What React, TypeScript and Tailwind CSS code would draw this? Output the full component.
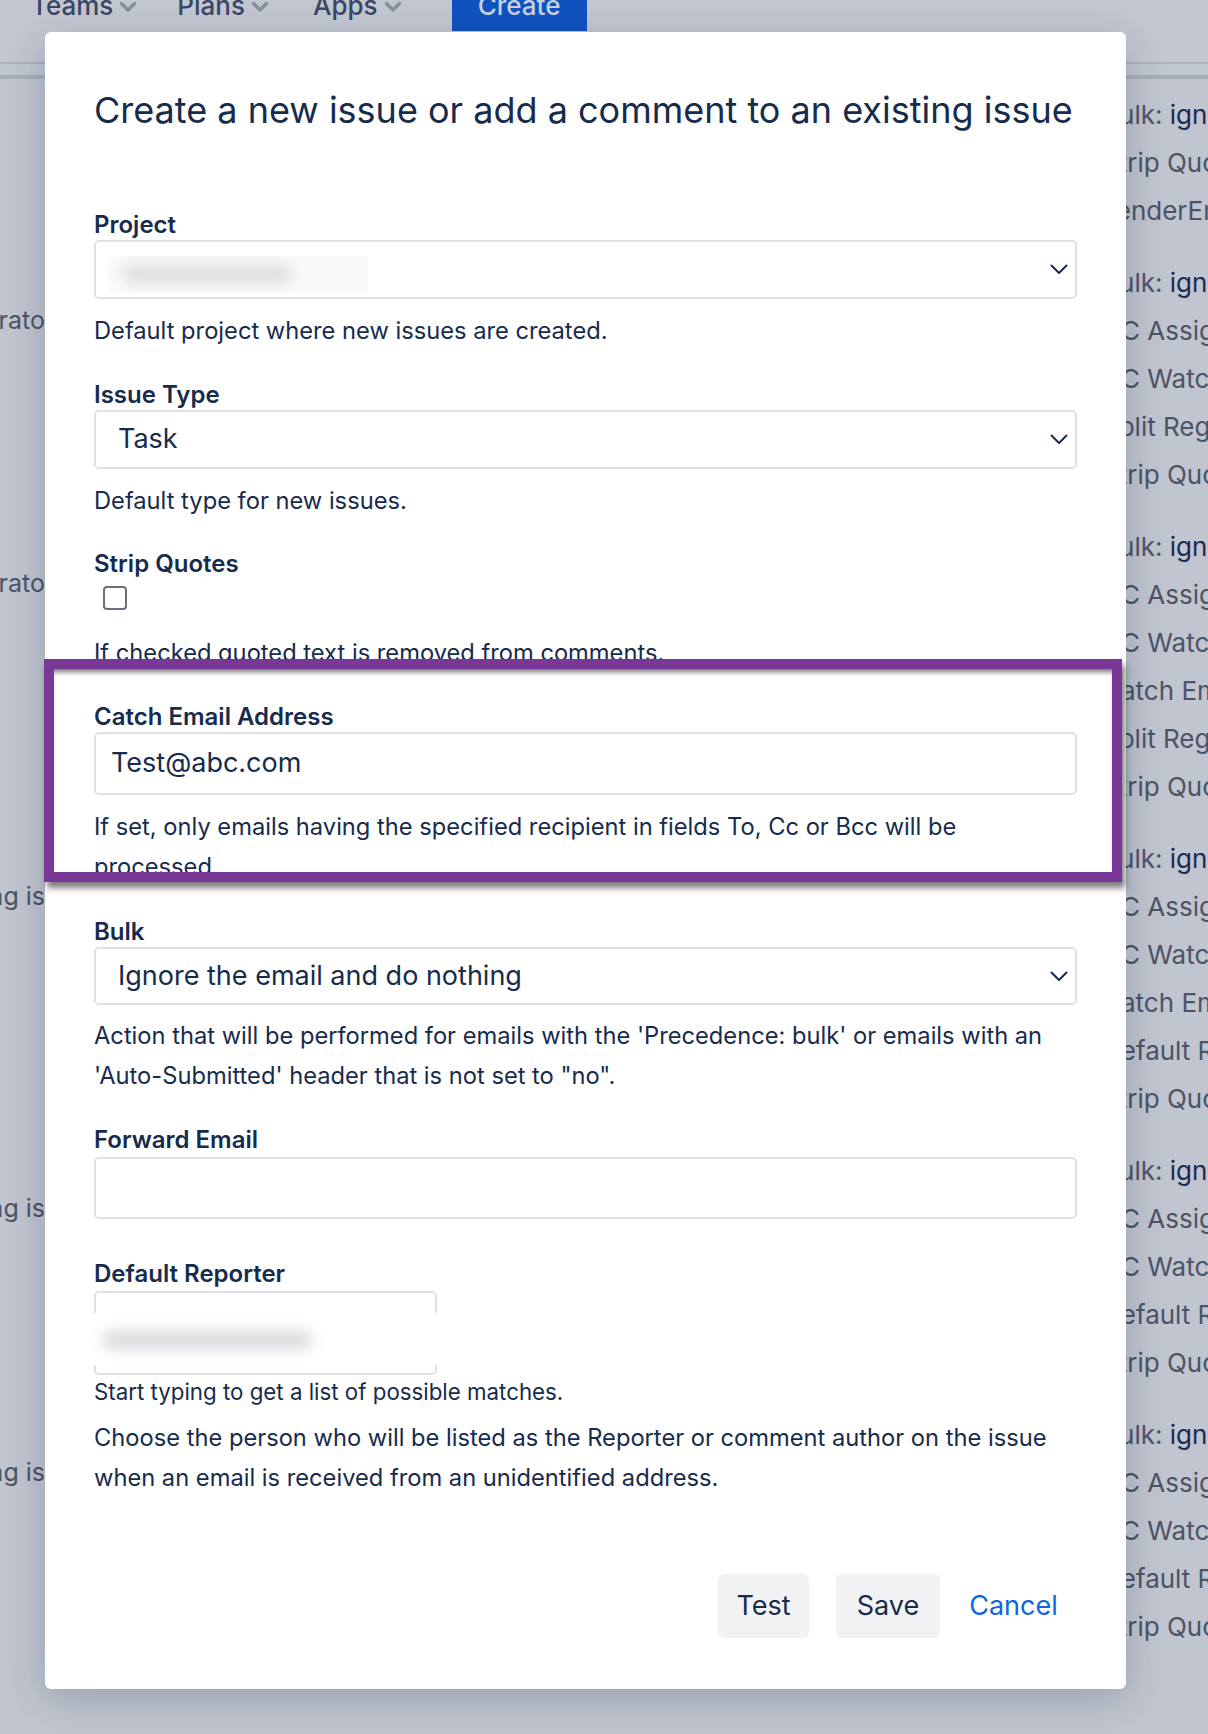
import React from "react";

const font = { fontFamily: "Inter, 'Noto Sans', 'Liberation Sans', sans-serif" };

function NavChevron() {
  return (
    <svg width="18" height="12" viewBox="0 0 18 12" className="ml-[6px] mt-[15px]">
      <path d="M2.5 2.5 L9 9 L15.5 2.5" fill="none" stroke="#8a8fa0" strokeWidth="3.4" strokeLinecap="round" strokeLinejoin="round" />
    </svg>
  );
}

function SelectChevron() {
  return (
    <svg width="18" height="11" viewBox="0 0 18 11">
      <path d="M1.5 1.5 L9 9 L16.5 1.5" fill="none" stroke="#172b4d" strokeWidth="2" strokeLinecap="round" strokeLinejoin="round" />
    </svg>
  );
}

function Label({ children, className = "" }: { children: React.ReactNode; className?: string }) {
  return <div className={`h-[30px] leading-[30px] text-[24px] font-semibold text-[#172b4d] ${className}`}>{children}</div>;
}

function Desc({ children, className = "" }: { children: React.ReactNode; className?: string }) {
  return <div className={`leading-[40px] text-[23.7px] text-[#172b4d] ${className}`}>{children}</div>;
}

function Select({ value, children }: { value?: string; children?: React.ReactNode }) {
  return (
    <div className="relative flex h-[59px] items-center justify-between rounded-[5px] border-2 border-[#dfe1e6] bg-white pl-[22px] pr-[7px]">
      <span className="text-[27px] text-[#172b4d]">{value}</span>
      {children}
      <SelectChevron />
    </div>
  );
}

type Line = { l: string; v?: string };
const groups: Line[][] = [
  [{ l: "Bulk: ", v: "ignore" }, { l: "Strip Quotes" }, { l: "senderEmail" }],
  [{ l: "Bulk: ", v: "ignore" }, { l: "CC Assignee" }, { l: "CC Watchers" }, { l: "Split Regex" }, { l: "Strip Quotes" }],
  [{ l: "Bulk: ", v: "ignore" }, { l: "CC Assignee" }, { l: "CC Watchers" }, { l: "Catch Email" }, { l: "Split Regex" }, { l: "Strip Quotes" }],
  [{ l: "Bulk: ", v: "ignore" }, { l: "CC Assignee" }, { l: "CC Watchers" }, { l: "Catch Email" }, { l: "Default Reporter" }, { l: "Strip Quotes" }],
  [{ l: "Bulk: ", v: "ignore" }, { l: "CC Assignee" }, { l: "CC Watchers" }, { l: "Default Reporter" }, { l: "Strip Quotes" }],
  [{ l: "Bulk: ", v: "ignore" }, { l: "CC Assignee" }, { l: "CC Watchers" }, { l: "Default Reporter" }, { l: "Strip Quotes" }],
];

export default function App() {
  return (
    <div className="relative flex h-[1734px] w-[1208px] flex-col overflow-hidden bg-[#c1c5cf]" style={font}>
      {/* header */}
      <div className="flex h-[62px] shrink-0 flex-col bg-[#c3c7d1]">
        <div className="-mt-[14px] flex items-start pl-[31px] text-[26px] font-medium text-[#3a4766]">
          <div className="flex h-[40px] items-start leading-[40px]">
            Teams
            <NavChevron />
          </div>
          <div className="ml-[40px] flex h-[40px] items-start leading-[40px]">
            Plans
            <NavChevron />
          </div>
          <div className="ml-[44px] flex h-[40px] items-start leading-[40px]">
            Apps
            <NavChevron />
          </div>
          <div className="ml-[50px] flex h-[45px] w-[135px] justify-center bg-[#1053c0] leading-[40px] text-[#c9d2e3]">
            Create
          </div>
        </div>
      </div>
      <div className="h-[2px] shrink-0 bg-[#adb1be]" />
      <div className="h-[11px] shrink-0 bg-[#c2c6d0]" />
      <div className="h-[4px] shrink-0 bg-[#a9aebb]" />

      {/* body */}
      <div className="-mt-[47px] flex">
        {/* left background column */}
        <div className="flex w-[45px] shrink-0 flex-col overflow-hidden text-[25px] text-[#4b5468]">
          <div className="mt-[269px] flex h-[40px] items-center justify-end whitespace-nowrap">Administrato</div>
          <div className="mt-[223px] flex h-[40px] items-center justify-end whitespace-nowrap">Administrato</div>
          <div className="mt-[273px] flex h-[40px] items-center justify-end whitespace-nowrap">Nothing is</div>
          <div className="mt-[272px] flex h-[40px] items-center justify-end whitespace-nowrap">Nothing is</div>
          <div className="mt-[224px] flex h-[40px] items-center justify-end whitespace-nowrap">Nothing is</div>
        </div>

        {/* modal */}
        <div className="relative z-10 flex w-[1081px] shrink-0 flex-col rounded-[6px] bg-white px-[49px] pb-[51px] pt-[58px] shadow-[0_10px_40px_rgba(9,30,66,0.22)]">
          <div className="h-[41px] whitespace-nowrap text-[36px] leading-[41px] text-[#172b4d]">
            Create a new issue or add a comment to an existing issue
          </div>

          <Label className="mt-[79px]">Project</Label>
          <Select>
            <div className="absolute left-[12px] top-[14px] h-[37px] w-[260px] overflow-hidden bg-[#fafafa]">
              <div className="absolute left-[14px] top-[8px] h-[20px] w-[170px] rounded-full bg-[#dedfe2] blur-[7px]" />
            </div>
          </Select>
          <Desc className="mt-[12px]">Default project where new issues are created.</Desc>

          <Label className="mt-[29px]">Issue Type</Label>
          <Select value="Task" />
          <Desc className="mt-[12px]">Default type for new issues.</Desc>

          <Label className="mt-[28px]">Strip Quotes</Label>
          <div className="mt-[7px] h-[25px]">
            <div className="ml-[9px] h-[24px] w-[24px] rounded-[4px] border-2 border-[#6b6f7a] bg-white" />
          </div>
          <Desc className="mt-[22px]">If checked quoted text is removed from comments.</Desc>

          {/* highlighted annotation box */}
          <div className="relative z-10 -ml-[50px] -mr-[45px] -mt-[14px] h-[223px] border-[10px] border-[#7a3896] bg-white shadow-[3px_6px_6px_rgba(0,0,0,0.5)]">
            <div className="h-[203px] overflow-hidden pl-[40px] pr-[35px] pt-[33px] shadow-[inset_0_6px_5px_-3px_rgba(0,0,0,0.55)]">
              <Label>Catch Email Address</Label>
              <div className="flex h-[63px] items-center rounded-[5px] border-2 border-[#dfe1e6] pl-[15px] text-[27px] text-[#172b4d]">
                Test@abc.com
              </div>
              <Desc className="mt-[12px]">
                If set, only emails having the specified recipient in fields To, Cc or Bcc will be processed.
              </Desc>
            </div>
          </div>

          <Label className="mt-[35px]">Bulk</Label>
          <div className="h-[58px]">
            <div className="flex h-[58px] items-center justify-between rounded-[5px] border-2 border-[#dfe1e6] pl-[22px] pr-[7px]">
              <span className="text-[27px] text-[#172b4d]">Ignore the email and do nothing</span>
              <SelectChevron />
            </div>
          </div>
          <Desc className="mt-[11px]">
            Action that will be performed for emails with the 'Precedence: bulk' or emails with an 'Auto-Submitted' header that is not set to "no".
          </Desc>

          <Label className="mt-[29px]">Forward Email</Label>
          <div className="mt-[2px] h-[62px] rounded-[5px] border-2 border-[#dfe1e6]" />

          <Label className="mt-[40px]">Default Reporter</Label>
          <div className="relative mt-[2px] h-[84px] w-[343px] rounded-[5px] border-2 border-[#dfe1e6]">
            <div className="absolute -left-[8px] top-[20px] h-[52px] w-[385px] overflow-hidden bg-white">
              <div className="absolute left-[14px] top-[17px] h-[20px] w-[210px] rounded-full bg-[#dcdde0] blur-[7px]" />
            </div>
          </div>
          <div className="mt-[5px] text-[22.3px] leading-[24px] text-[#172b4d]">Start typing to get a list of possible matches.</div>
          <Desc className="mt-[14px]">
            Choose the person who will be listed as the Reporter or comment author on the issue when an email is received from an unidentified address.
          </Desc>

          <div className="mt-[76px] flex h-[64px] justify-end text-[27px]">
            <div className="flex w-[91px] items-center justify-center rounded-[6px] bg-[#f1f2f4] text-[#172b4d]">Test</div>
            <div className="ml-[27px] flex w-[104px] items-center justify-center rounded-[6px] bg-[#f1f2f4] text-[#172b4d]">Save</div>
            <div className="ml-[10px] flex w-[127px] items-center justify-center text-[#0c66e4]">Cancel</div>
          </div>
        </div>

        {/* right background column */}
        <div className="flex min-w-0 flex-1 flex-col overflow-hidden pt-[59px] text-[26px]">
          {groups.map((g, gi) => (
            <div key={gi} className="mb-[24px] flex flex-col">
              {g.map((line, li) => (
                <div key={li} className="-ml-[24px] h-[48px] whitespace-nowrap leading-[48px] text-[#4b5468]">
                  {line.l}
                  {line.v && <span className="text-[#1c2a4f]">{line.v}</span>}
                </div>
              ))}
            </div>
          ))}
        </div>
      </div>
    </div>
  );
}
